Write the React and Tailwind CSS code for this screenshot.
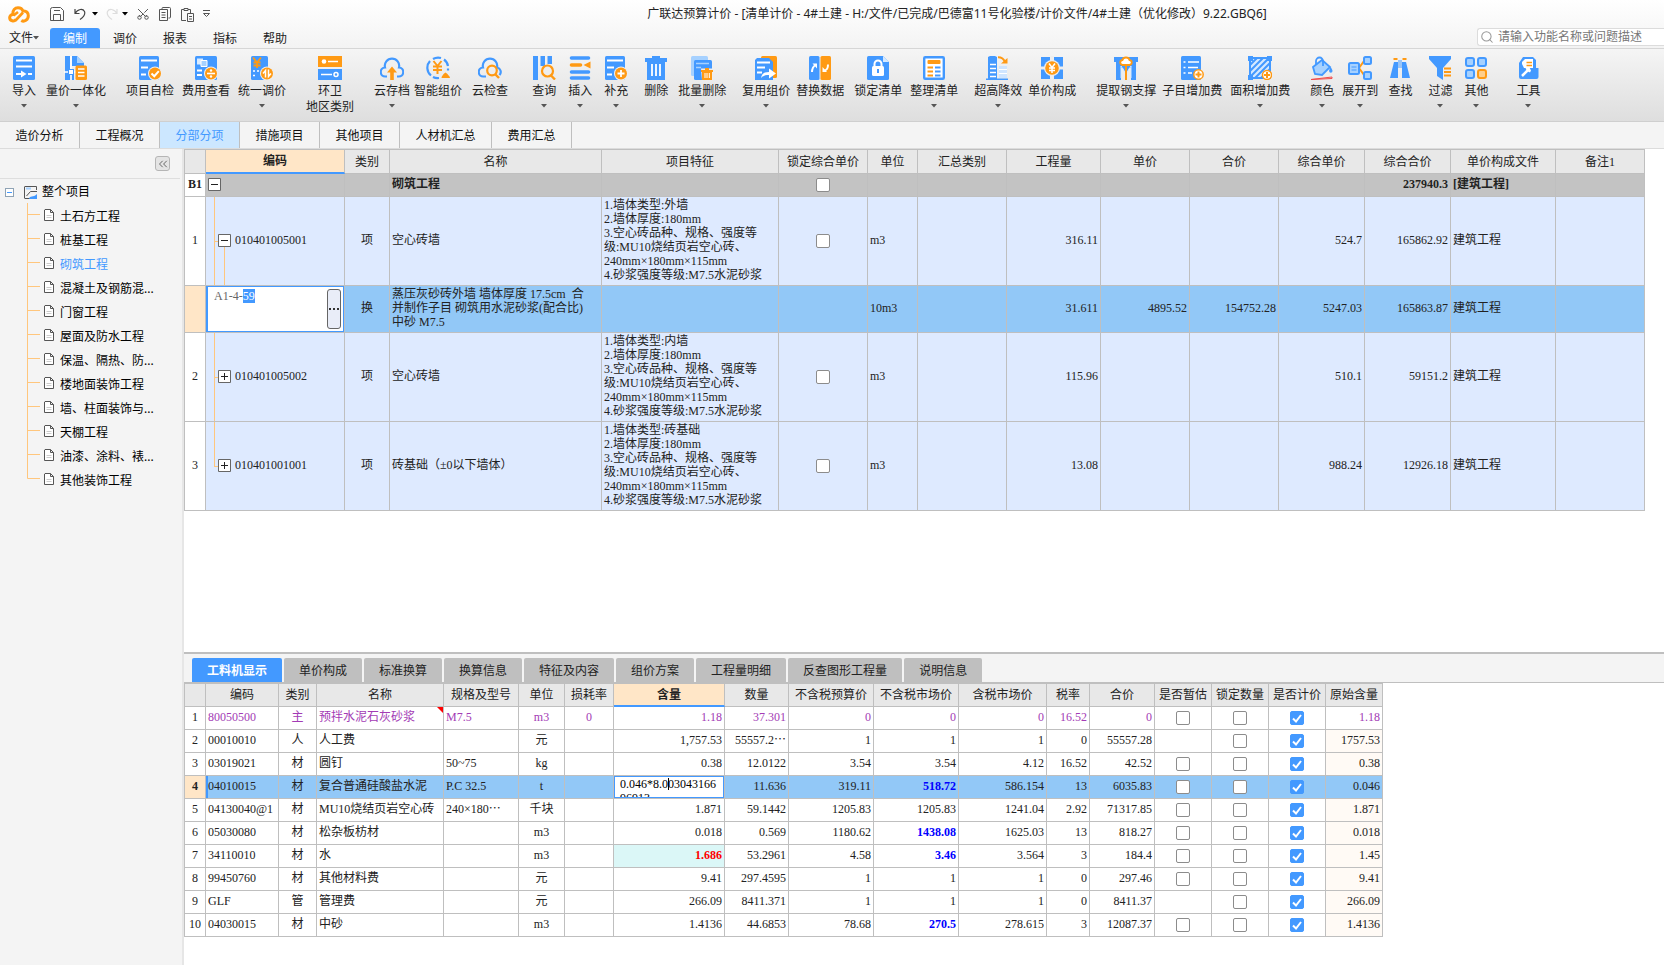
import { useEffect, useRef, useState } from "react"
import clsx from "clsx"
import { Search, Scissors, ChevronsLeft } from "lucide-react"

const BLUE = "#4399ff"
const ORANGE = "#ff9a14"
const PALE = "#a6d1ff"

const badge = (
  <>
    <circle cx="17" cy="17.5" r="7" fill="#efefef" />
    <circle cx="17" cy="17.5" r="6" fill={ORANGE} />
  </>
)

const icons = {
  import: (
    <>
      <rect x="1" width="22" height="24" rx="1.5" fill={BLUE} />
      <path d="M4 4.5h16M4 10.5h16M16 18h4M4 18h6" stroke="#fff" strokeWidth="1.8" />
      <path d="M9 14.5l5.5 3.5L9 21.5z" fill="#fff" />
    </>
  ),
  integrate: (
    <>
      <path d="M1 0h5v24H1zM8 0h5l7 7v3H8zM1 14h9v10H1z" fill={BLUE} />
      <path d="M13 0l7 7h-7z" fill={PALE} />
      <path d="M7 0v24M0 16h12" stroke="#fff" strokeWidth="1.6" />
      <rect x="4.5" y="13.500" width="5" height="5" fill="#fff" stroke={BLUE} />
      <rect x="11.500" y="9.500" width="11.500" height="14.500" rx="1.5" fill={ORANGE} />
      <path d="M14 13h6.5M14 16.500h6.500M14 20h6.500" stroke="#fff" strokeWidth="1.5" />
    </>
  ),
  check: (
    <>
      <rect x="1" width="20" height="24" rx="1.5" fill={BLUE} />
      <path d="M3 4.5h16M3 11.5h7M3 18.5h5" stroke="#fff" strokeWidth="1.8" />
      {badge}
      <path d="M13.5 17.5l2.8 2.7 4.5-5" stroke="#fff" strokeWidth="2" />
    </>
  ),
  fee: (
    <>
      <rect x="1" width="22" height="24" rx="1.5" fill={BLUE} />
      <path d="M3 2.5h6v6H3z" fill="#d9ebff" />
      <path d="M7 4.5h6v6H7z" fill={PALE} stroke="#fff" />
      <path d="M3 14.5h5M3 19h5" stroke="#fff" strokeWidth="1.8" />
      {badge}
      <path d="M13 17.5h8" stroke="#fff" strokeWidth="1.6" />
      <circle cx="17" cy="14.5" r="1.2" fill="#fff" />
      <circle cx="17" cy="20.5" r="1.2" fill="#fff" />
    </>
  ),
  adjust: (
    <>
      <rect x="1" width="17" height="24" rx="1.5" fill={BLUE} />
      <path d="M3 1.5l4 5 4-5M7 6v6M3.5 6.5h7M3.5 9.5h7" stroke={ORANGE} strokeWidth="1.8" />
      <path d="M3 15h2M3 19.5h2M7 15h2" stroke="#fff" strokeWidth="1.6" />
      {badge}
      <path d="M15.5 21.5v-7l-2.500 3M18.500 13.500v7l2.500-3" stroke="#fff" strokeWidth="1.5" />
    </>
  ),
  region: (
    <>
      <rect width="24" height="11" fill={ORANGE} />
      <rect y="13" width="24" height="11" fill={BLUE} />
      <circle cx="6" cy="5.5" r="2.300" fill="#fff" />
      <circle cx="18" cy="18.5" r="2" stroke="#fff" strokeWidth="1.5" />
      <path d="M10 5.5h10M3 18.5h11" stroke="#fff" strokeWidth="1.6" />
    </>
  ),
  cloudUp: (
    <>
      <path d="M7 20.5H5.5a4.500 4.500 0 0 1-.5-9 7.200 7.200 0 1 1 14 0 4.500 4.500 0 0 1-.5 9H17" stroke={BLUE} strokeWidth="2.2" />
      <path d="M12 10.5l5 6h-3.200V24h-3.600v-7.500H7z" fill={ORANGE} />
    </>
  ),
  smart: (
    <>
      <path d="M5 19.5A10 10 0 0 1 4 5M7 3a10 10 0 0 1 8-1M18 3.5a10 10 0 0 1 4 6.500M22 12.500v2M7 21a10 10 0 0 0 6 1" stroke={BLUE} strokeWidth="2.2" />
      <path d="M7.500 5l4 5 4-5M11.500 9.500V18M7 10.500h9M7 14h9" stroke={ORANGE} strokeWidth="2" />
      <path d="M15.500 22c0-2 1.500-2.500 2-4l2-1.500 2 1.500c.5 1.500 2.500 2 2.500 4z" fill={ORANGE} />
    </>
  ),
  cloudSearch: (
    <>
      <path d="M8 20.5H5.500a4.500 4.500 0 0 1-.5-9 7.200 7.200 0 1 1 14 0 4.500 4.500 0 0 1 2.500 7.500" stroke={BLUE} strokeWidth="2.2" />
      <circle cx="14" cy="14.5" r="4.8" stroke={ORANGE} strokeWidth="2.2" />
      <path d="M17.5 18.5l3.500 3.500" stroke={ORANGE} strokeWidth="2.4" />
    </>
  ),
  query: (
    <>
      <path d="M1 0h5v24H1zM8.500 0h4.500v10H8.500zM15.500 0H20v8h-4.500z" fill={BLUE} />
      <circle cx="15.5" cy="15" r="5.5" fill="#eee" stroke={ORANGE} strokeWidth="2.2" />
      <path d="M19 19.5l4 4" stroke={ORANGE} strokeWidth="2.4" />
    </>
  ),
  insert: (
    <>
      <path d="M3.5 2h17M3.5 16h17M3.5 22h17" stroke={BLUE} strokeWidth="3.6" strokeLinecap="round" />
      <path d="M3.5 9h9" stroke={ORANGE} strokeWidth="3.6" strokeLinecap="round" />
      <path d="M22.500 5.500v7L15.500 9z" fill={ORANGE} />
    </>
  ),
  supplement: (
    <>
      <rect x="1" width="20" height="24" rx="1.5" fill={BLUE} />
      <path d="M3 4.5h16M3 11.5h7M3 18.5h5" stroke="#fff" strokeWidth="1.8" />
      {badge}
      <path d="M13.5 17.5h7M17 14v7" stroke="#fff" strokeWidth="1.8" />
    </>
  ),
  trash: (
    <>
      <path d="M8 0h8v2h7v4h-2v18H3V6H1V2h7z" fill={BLUE} />
      <path d="M8 8v12M12 8v12M16 8v12" stroke="#fff" strokeWidth="1.8" />
    </>
  ),
  batchTrash: (
    <>
      <rect x="1" width="17" height="20" rx="1.5" fill={PALE} />
      <rect x="4" y="4" width="18" height="20" rx="1.5" fill={BLUE} />
      <path d="M6 7.5h13M6 11.5h5" stroke={PALE} strokeWidth="1.6" />
      <path d="M11 12.500h12V24H12z" fill="#eee" />
      <path d="M15 12h4v2h4v2h-1v8H12v-8h-1v-2h4z" fill={ORANGE} />
      <path d="M15 17v5M17 17v5M19.300 17v5" stroke="#fff" />
    </>
  ),
  reuse: (
    <>
      <rect x="7" width="16" height="22" rx="1.5" fill={ORANGE} />
      <path d="M3 2h12l4 4v18H1V4z" fill={BLUE} />
      <path d="M3 6.5h13M3 11.5h8M3 16.5h5" stroke="#fff" strokeWidth="1.8" />
      <path d="M7 22c1-5 4-6 8-6v-3.500l7 5-7 5V19c-3 0-5 0-8 3z" fill="#fff" />
    </>
  ),
  replace: (
    <>
      <rect x="1" width="10.5" height="24" rx="1.5" fill={BLUE} />
      <rect x="12.5" width="10.5" height="24" rx="1.5" fill={ORANGE} />
      <path d="M4 16c0-4 1-5.500 4-7.500M20 8.500c0 4-1 5-4 6.500" stroke="#fff" strokeWidth="2" />
      <path d="M4.500 7.500H9v5zM19 16h-4.500v-5z" fill="#fff" />
    </>
  ),
  lock: (
    <>
      <path d="M2.500 0H17l6 6v16.500q0 1.500-1.500 1.500h-19Q1 24 1 22.500v-21Q1 0 2.500 0z" fill={BLUE} />
      <path d="M17 0l6 6h-6z" fill="#d5e9ff" />
      <path d="M8.500 11V8a3.500 3.500 0 0 1 7 0v3" stroke="#fff" strokeWidth="2" />
      <rect x="6" y="10" width="12" height="10" rx="1.5" fill="#fff" />
      <path d="M12 13v4" stroke={BLUE} strokeWidth="2" />
    </>
  ),
  tidy: (
    <>
      <rect x="2.200" y="1.200" width="19.600" height="21.600" rx="1" fill="#fff" stroke={BLUE} strokeWidth="2.4" />
      <rect x="5.500" y="4" width="13" height="4" rx="1" fill={ORANGE} />
      <path d="M5.500 11.500h5.500M5.500 15.500h5.500M5.500 19.500h5.500" stroke={ORANGE} strokeWidth="2" />
      <path d="M13 11.500h5.500M13 15.500h5.500M13 19.500h5.500" stroke={BLUE} strokeWidth="2" />
    </>
  ),
  height: (
    <>
      <path d="M2 1l2-1h5l2 1v23H2zM0 22.500h22V24H0z" fill={BLUE} />
      <path d="M4 8.500h6M4 12.500h6M4 16.500h6M4 20.500h6" stroke="#fff" strokeWidth="1.5" />
      <path d="M13 10h8v12h-8z" fill="#cfe5ff" />
      <path d="M13 13.500h8M13 17.500h8" stroke="#fff" />
      <path d="M12 1.200c4 0 6 1.800 7 5" stroke={ORANGE} strokeWidth="2" />
      <path d="M15 7.500h6.500V2z" fill={ORANGE} />
    </>
  ),
  compose: (
    <>
      <path d="M1 1h9v22H1zM14 1h9v22h-9z" fill={BLUE} />
      <path d="M12 0v24M0 12h24" stroke="#eee" strokeWidth="3" />
      <circle cx="12" cy="12" r="8" fill="#eee" />
      <circle cx="12" cy="12" r="6.8" fill={ORANGE} />
      <path d="M9 7.500l3 4 3-4M12 11v6M9 12h6M9 14.500h6" stroke="#fff" strokeWidth="1.5" />
    </>
  ),
  steel: (
    <>
      <path d="M0 1h24v5h-2v18h-5V12h-2l-3 6-3-6H7v12H2V6H0z" fill={BLUE} />
      <path d="M7 22V10l5 8 5-8v12" stroke="#d5e9ff" />
      <path d="M12 1.500c2 0 3.200 1 3.500 2.500 3 .5 3 4.500 0 5h-7c-3-.5-3-4.500 0-5C8.800 2.500 10 1.500 12 1.500z" fill="#fff" stroke={ORANGE} strokeWidth="1.8" />
      <path d="M12 9v15" stroke={ORANGE} strokeWidth="2" />
    </>
  ),
  subAdd: (
    <>
      <rect x="1" width="20" height="24" rx="1.5" fill={BLUE} />
      <path d="M8 6h11M8 11.500h10M8 17h4M3.500 6h2M3.500 11.500h2M3.500 17h2" stroke="#fff" strokeWidth="1.6" />
      <circle cx="18.5" cy="18.5" r="4.700" fill="#fff" stroke={ORANGE} strokeWidth="1.5" />
      <path d="M15.500 18.500h6M18.500 15.500v6" stroke={ORANGE} strokeWidth="2" />
    </>
  ),
  areaAdd: (
    <>
      <path d="M2 2h20v20H2z" fill="#d5e9ff" stroke={BLUE} strokeWidth="2" />
      <path d="M2 9l7-7M2 15L15 2M2 21L21 2M7 22L22 7M13 22l9-9" stroke={BLUE} strokeWidth="2" />
      <path d="M0 0h5v5H0zM19 0h5v5h-5zM0 19h5v5H0z" fill={BLUE} />
      <circle cx="19" cy="19" r="4.5" fill="#fff" stroke={ORANGE} strokeWidth="1.5" />
      <path d="M16 19h6M19 16v6" stroke={ORANGE} strokeWidth="2" />
    </>
  ),
  color: (
    <>
      <path d="M3 11l9-7 8 7-8 8-7-1z" fill={PALE} stroke={BLUE} strokeWidth="1.8" />
      <path d="M6 9V5a3.500 3.500 0 0 1 7 0v5" stroke={BLUE} strokeWidth="1.8" />
      <path d="M20.500 11c1.500 2 2 3 2 4a1.700 1.700 0 0 1-3.400 0c0-1 .4-2 1.400-4z" fill={BLUE} />
      <path d="M1 23.500l21-2.500v1.500z" stroke="#f04a4a" />
    </>
  ),
  expand: (
    <>
      <path d="M11 12l5-7M11 12l5 7" stroke={ORANGE} strokeWidth="2" />
      <rect x="1" y="7" width="10" height="11" rx="1.5" fill={PALE} stroke={BLUE} strokeWidth="2" />
      <path d="M3.500 11h5M3.500 14h5" stroke={BLUE} />
      <rect x="16" y="1" width="7" height="7" rx="1.5" fill={PALE} stroke={BLUE} strokeWidth="2" />
      <rect x="16" y="16" width="7" height="7" rx="1.5" fill={PALE} stroke={BLUE} strokeWidth="2" />
    </>
  ),
  find: (
    <>
      <path d="M6 6h4v16H2zM14 6h4l4 16h-8z" fill={BLUE} />
      <path d="M11 4v8M13 4v8" stroke={BLUE} />
      <path d="M5.500 3h4M14.500 3h4" stroke={ORANGE} strokeWidth="2" />
    </>
  ),
  filter: (
    <>
      <path d="M1 0h22v3l-8 9v12l-6-4v-8L1 3z" fill={BLUE} />
      <path d="M16 12.500h7M16 16h7M16 19.500h7" stroke={ORANGE} strokeWidth="2" />
    </>
  ),
  other: (
    <>
      <rect x="2" y="2" width="8" height="8" rx="2" fill={PALE} stroke={BLUE} strokeWidth="2" />
      <rect x="14" y="2" width="8" height="8" rx="2" fill={PALE} stroke={BLUE} strokeWidth="2" />
      <rect x="2" y="14" width="8" height="8" rx="2" fill={PALE} stroke={BLUE} strokeWidth="2" />
      <rect x="14" y="14" width="8" height="8" rx="2" fill="#ffcf8c" stroke={ORANGE} strokeWidth="2" />
    </>
  ),
  tool: (
    <>
      <path d="M7 1h10l3 3v8h2.500v9q0 2-2 2H5q-2 0-2-2V7z" fill={BLUE} />
      <path d="M6 8V6l3-3h8v9H8z" fill="#fff" />
      <path d="M10.500 6.500h5.500M10.500 9.500h5.500" stroke={ORANGE} strokeWidth="1.6" />
      <path d="M6 20l6-6" stroke="#fff" strokeWidth="2.5" />
      <path d="M9.500 12l1.500 3 3 1.500 1-2-1.500-3z" fill="#fff" />
    </>
  ),
}

const ribbonItems = [
  { icon: "import", label: "导入", menu: true, gap: "ml-3" },
  { icon: "integrate", label: "量价一体化", menu: true, gap: "ml-2.5" },
  { icon: "check", label: "项目自检", gap: "ml-5" },
  { icon: "fee", label: "费用查看", gap: "ml-2" },
  { icon: "adjust", label: "统一调价", menu: true, gap: "ml-2" },
  { icon: "region", label: "环卫", sub: "地区类别", gap: "ml-5" },
  { icon: "cloudUp", label: "云存档", menu: true, gap: "ml-5" },
  { icon: "smart", label: "智能组价", gap: "ml-1" },
  { icon: "cloudSearch", label: "云检查", gap: "ml-2.5" },
  { icon: "query", label: "查询", menu: true, gap: "ml-6" },
  { icon: "insert", label: "插入", menu: true, gap: "ml-3" },
  { icon: "supplement", label: "补充", menu: true, gap: "ml-3" },
  { icon: "trash", label: "删除", gap: "ml-4" },
  { icon: "batchTrash", label: "批量删除", menu: true, gap: "ml-2.5" },
  { icon: "reuse", label: "复用组价", menu: true, gap: "ml-4" },
  { icon: "replace", label: "替换数据", gap: "ml-1.5" },
  { icon: "lock", label: "锁定清单", gap: "ml-2.5" },
  { icon: "tidy", label: "整理清单", menu: true, gap: "ml-2" },
  { icon: "height", label: "超高降效", menu: true, gap: "ml-4" },
  { icon: "compose", label: "单价构成", gap: "ml-1.5" },
  { icon: "steel", label: "提取钢支撑", menu: true, gap: "ml-5" },
  { icon: "subAdd", label: "子目增加费", gap: "ml-1.5" },
  { icon: "areaAdd", label: "面积增加费", menu: true, gap: "ml-2" },
  { icon: "color", label: "颜色", menu: true, gap: "ml-5" },
  { icon: "expand", label: "展开到", menu: true, gap: "ml-2" },
  { icon: "find", label: "查找", gap: "ml-2.5" },
  { icon: "filter", label: "过滤", menu: true, gap: "ml-4" },
  { icon: "other", label: "其他", menu: true, gap: "ml-3" },
  { icon: "tool", label: "工具", menu: true, gap: "ml-7" },
]

const menus = ["编制", "调价", "报表", "指标", "帮助"]

const pages = ["造价分析", "工程概况", "分部分项", "措施项目", "其他项目", "人材机汇总", "费用汇总"]

const treeItems = [
  "土石方工程", "桩基工程", "砌筑工程", "混凝土及钢筋混...", "门窗工程", "屋面及防水工程",
  "保温、隔热、防...", "楼地面装饰工程", "墙、柱面装饰与...", "天棚工程", "油漆、涂料、裱...", "其他装饰工程",
]

const billColumns = [
  { title: "", width: 21 },
  { title: "编码", width: 139 },
  { title: "类别", width: 45 },
  { title: "名称", width: 212 },
  { title: "项目特征", width: 177 },
  { title: "锁定综合单价", width: 89 },
  { title: "单位", width: 50 },
  { title: "汇总类别", width: 89 },
  { title: "工程量", width: 94 },
  { title: "单价", width: 89 },
  { title: "合价", width: 89 },
  { title: "综合单价", width: 86 },
  { title: "综合合价", width: 86 },
  { title: "单价构成文件", width: 105 },
  { title: "备注1", width: 89 },
]

const feature = (type) =>
  `1.墙体类型:${type}\n2.墙体厚度:180mm\n3.空心砖品种、规格、强度等\n级:MU10烧结页岩空心砖、\n240mm×180mm×115mm\n4.砂浆强度等级:M7.5水泥砂浆`

const billRows = [
  { no: "1", code: "010401005001", open: true, kind: "项", name: "空心砖墙", feature: feature("外墙"), unit: "m3", qty: "316.11", unitPrice: "524.7", total: "165862.92" },
  { no: "", editing: true, kind: "换", name: "蒸压灰砂砖外墙 墙体厚度 17.5cm  合\n并制作子目 砌筑用水泥砂浆(配合比)\n中砂 M7.5", unit: "10m3", qty: "31.611", price: "4895.52", amount: "154752.28", unitPrice: "5247.03", total: "165863.87" },
  { no: "2", code: "010401005002", kind: "项", name: "空心砖墙", feature: feature("内墙"), unit: "m3", qty: "115.96", unitPrice: "510.1", total: "59151.2" },
  { no: "3", code: "010401001001", last: true, kind: "项", name: "砖基础（±0以下墙体）", feature: feature("砖基础"), unit: "m3", qty: "13.08", unitPrice: "988.24", total: "12926.18" },
]

const detailTabs = ["工料机显示", "单价构成", "标准换算", "换算信息", "特征及内容", "组价方案", "工程量明细", "反查图形工程量", "说明信息"]

const detailColumns = [
  { title: "", width: 21 },
  { title: "编码", width: 73 },
  { title: "类别", width: 38 },
  { title: "名称", width: 127 },
  { title: "规格及型号", width: 75 },
  { title: "单位", width: 46 },
  { title: "损耗率", width: 49 },
  { title: "含量", width: 111 },
  { title: "数量", width: 64 },
  { title: "不含税预算价", width: 85 },
  { title: "不含税市场价", width: 85 },
  { title: "含税市场价", width: 88 },
  { title: "税率", width: 43 },
  { title: "合价", width: 65 },
  { title: "是否暂估", width: 57 },
  { title: "锁定数量", width: 57 },
  { title: "是否计价", width: 57 },
  { title: "原始含量", width: 57 },
]

// code, kind, name, spec, unit, loss, content, quantity, budget, market, taxed, rate, total, original
const detailRows = [
  { cells: ["80050500", "主", "预拌水泥石灰砂浆", "M7.5", "m3", "0", "1.18", "37.301", "0", "0", "0", "16.52", "0", "1.18"], main: true },
  { cells: ["00010010", "人", "人工费", "", "元", "", "1,757.53", "55557.2⋯", "1", "1", "1", "0", "55557.28", "1757.53"], noEstimate: true },
  { cells: ["03019021", "材", "圆钉", "50~75", "kg", "", "0.38", "12.0122", "3.54", "3.54", "4.12", "16.52", "42.52", "0.38"] },
  { cells: ["04010015", "材", "复合普通硅酸盐水泥", "P.C 32.5", "t", "", "", "11.636", "319.11", "518.72", "586.154", "13", "6035.83", "0.046"], editing: true, changed: true },
  { cells: ["04130040@1", "材", "MU10烧结页岩空心砖", "240×180⋯", "千块", "", "1.871", "59.1442", "1205.83", "1205.83", "1241.04", "2.92", "71317.85", "1.871"] },
  { cells: ["05030080", "材", "松杂板枋材", "", "m3", "", "0.018", "0.569", "1180.62", "1438.08", "1625.03", "13", "818.27", "0.018"], changed: true },
  { cells: ["34110010", "材", "水", "", "m3", "", "1.686", "53.2961", "4.58", "3.46", "3.564", "3", "184.4", "1.45"], changed: true, adjusted: true },
  { cells: ["99450760", "材", "其他材料费", "", "元", "", "9.41", "297.4595", "1", "1", "1", "0", "297.46", "9.41"] },
  { cells: ["GLF", "管", "管理费", "", "元", "", "266.09", "8411.371", "1", "1", "1", "0", "8411.37", "266.09"], noEstimate: true },
  { cells: ["04030015", "材", "中砂", "", "m3", "", "1.4136", "44.6853", "78.68", "270.5", "278.615", "3", "12087.37", "1.4136"], changed: true },
]

const Caret = ({ className }) => (
  <svg viewBox="0 0 6 4" className={clsx("h-1 w-1.5", className)} fill="currentColor" aria-hidden="true">
    <path d="M0 0h6L3 3.5z" />
  </svg>
)

const Checkbox = ({ label, defaultChecked = false }) => {
  const [checked, setChecked] = useState(defaultChecked)

  return (
    <span className="inline-grid align-middle">
      <input
        type="checkbox"
        aria-label={label}
        checked={checked}
        onChange={(e) => setChecked(e.target.checked)}
        className="col-start-1 row-start-1 h-3.5 w-3.5 appearance-none rounded-[2px] border border-[#8c8c8c] bg-white checked:border-[#4399ff] checked:bg-[#4399ff]"
      />
      {checked && (
        <svg viewBox="0 0 14 14" className="pointer-events-none col-start-1 row-start-1 h-3.5 w-3.5" fill="none">
          <path d="M3 7.5l3 3L11 4" stroke="#fff" strokeWidth="2" />
        </svg>
      )}
    </span>
  )
}

const QuickAccess = () => (
  <div className="flex items-center text-[#555]">
    <svg viewBox="0 0 22 17" className="ml-2 h-[17px] w-[22px]" fill="none" role="img" aria-label="广联达">
      <path d="M8 13.5c-2 2.500-6 1.500-6.300-1.500-.2-2 1.300-3.500 3.300-3.500C4.500 4 7 1.700 10 1.700c2.500 0 4.300 1.300 5 3.300 3.500-.5 5.300 2 5.300 4.800 0 4-4 6.500-7 4.700" stroke={ORANGE} strokeWidth="3" />
      <path d="M7.5 14.5l7.500-8M10 6L5.500 9.500" stroke={ORANGE} strokeWidth="2.6" />
    </svg>
    <button type="button" aria-label="保存" className="ml-5">
      <svg viewBox="0 0 14 14" className="h-3.5 w-3.5" fill="none" stroke="currentColor">
        <path d="M.5 2.500q0-2 2-2h8l3 3v10H.5zM3.500 13.500V7.500h7v6M4 3.500h6" />
      </svg>
    </button>
    <button type="button" aria-label="撤销" className="ml-2.5 text-[#444]">
      <svg viewBox="0 0 12 12" className="h-3 w-3" fill="none" stroke="currentColor" strokeWidth="1.2">
        <path d="M1 1v4.500h4.500M1 5.500C4 .5 9 .5 10.500 3.500c1.200 3-.5 5-4.500 8" />
      </svg>
    </button>
    <button type="button" aria-label="撤销列表" className="ml-1.5 text-black">
      <Caret />
    </button>
    <button type="button" aria-label="恢复" className="ml-2 text-[#ddd]">
      <svg viewBox="0 0 12 12" className="h-3 w-3" fill="none" stroke="currentColor" strokeWidth="1.2">
        <path d="M11 1v4.500H6.500M11 5.500C8 .5 3 .5 1.500 3.500c-1.200 3 .5 5 4.500 8" />
      </svg>
    </button>
    <button type="button" aria-label="恢复列表" className="ml-1 text-black">
      <Caret />
    </button>
    <button type="button" aria-label="剪切" className="ml-2">
      <Scissors className="h-3.5 w-3.5 -rotate-90" strokeWidth={1.7} />
    </button>
    <button type="button" aria-label="复制" className="ml-2">
      <svg viewBox="0 0 14 14" className="h-3.5 w-3.5" fill="none" stroke="currentColor">
        <path d="M4 2.500V1.500q0-1 1-1h6.500q1 0 1 1V10q0 1-1 1h-1M1.500 2.500h8v11h-8zM3.500 5.500h4M3.500 8h4M3.500 10.500h4" />
      </svg>
    </button>
    <button type="button" aria-label="粘贴" className="ml-2">
      <svg viewBox="0 0 15 15" className="h-[15px] w-[15px]" fill="none" stroke="currentColor">
        <path d="M6 13.500H1.500v-11H4M8 2.500h2.500V6M4 1.500h4v2H4zM7.500 6.500h6v8h-6zM9 9.500h3M9 12h3" />
      </svg>
    </button>
    <button type="button" aria-label="自定义工具栏" className="ml-2">
      <svg viewBox="0 0 7 8" className="h-2 w-[7px]" fill="none" stroke="currentColor">
        <path d="M0 .5h7M.5 3.500h6L3.500 6.500z" />
      </svg>
    </button>
  </div>
)

const TitleArea = () => (
  <header className="border-b border-[#d6d6d6] bg-gradient-to-b from-white to-[#f3f3f3]">
    <div className="flex h-7 items-center">
      <QuickAccess />
      <h1 className="flex-1 pl-10 text-center text-[#222]">
        广联达预算计价 - [清单计价 - 4#土建 - H:/文件/已完成/巴德富11号化验楼/计价文件/4#土建（优化修改）9.22.GBQ6]
      </h1>
    </div>
    <div className="flex h-5 items-stretch">
      <button type="button" className="flex w-[50px] items-center pl-[9px]">
        文件
        <Caret className="text-[#555]" />
      </button>
      {menus.map((menu, i) => (
        <button
          key={menu}
          type="button"
          className={clsx("w-[50px] pt-px", i === 0 && "rounded-t-[3px] bg-[#4399ff] text-white")}
        >
          {menu}
        </button>
      ))}
      <label className="mb-0.5 ml-auto flex w-[187px] items-center gap-1 rounded-l-[3px] border border-r-0 border-[#dcdcdc] bg-white pl-0.5">
        <Search className="h-3.5 w-3.5 shrink-0 text-[#999]" strokeWidth={1.8} />
        <input
          type="search"
          aria-label="功能搜索"
          placeholder="请输入功能名称或问题描述"
          className="min-w-0 flex-1 outline-none placeholder:text-[#777]"
        />
      </label>
    </div>
  </header>
)

const Ribbon = () => (
  <div className="flex h-[73px] items-start overflow-hidden border-b border-[#cfcfcf] bg-gradient-to-b from-[#f5f5f5] to-[#dedede] pt-[7px]">
    {ribbonItems.map((item) => (
      <button key={item.label} type="button" className={clsx("flex shrink-0 flex-col items-center whitespace-nowrap", item.gap, item.sub && "w-12")}>
        <svg viewBox="0 0 24 24" className="h-6 w-6" fill="none" aria-hidden="true">
          {icons[item.icon]}
        </svg>
        <span className="h-[18px] leading-[22px]">{item.label}</span>
        {item.sub && <span className="leading-[18px]">{item.sub}</span>}
        {item.menu && <Caret className="mt-1.5 text-[#555]" />}
      </button>
    ))}
  </div>
)

const PageTabs = () => (
  <nav className="flex h-[27px] border-b border-[#dcdcdc] bg-[#f4f4f4]">
    {pages.map((page) => (
      <button
        key={page}
        type="button"
        className={clsx(
          "border-r border-[#bfbfbf] pt-0.5 whitespace-nowrap",
          page === "人材机汇总" ? "w-[92px]" : "w-20",
          page === "分部分项" ? "bg-[#cce7ff] text-[#4399ff]" : "text-[#111]"
        )}
      >
        {page}
      </button>
    ))}
  </nav>
)

const Sidebar = () => (
  <aside className="w-[184px] shrink-0 border-r-2 border-[#e6e6e6] bg-[#f4f4f4]">
    <div className="mr-0.5 flex h-[30px] items-center justify-end border-b border-[#dedede] pr-2.5">
      <button type="button" aria-label="收起" className="grid h-[15px] w-[15px] place-items-center rounded-[3px] border border-[#b5b5b5] bg-[#e4e4e4] text-[#555]">
        <ChevronsLeft className="h-3.5 w-3.5" strokeWidth={1.5} />
      </button>
    </div>
    <div className="flex h-6 items-center pt-0.5 pl-[5px]">
      <svg viewBox="0 0 9 9" className="h-[9px] w-[9px]" fill="none">
        <rect x=".5" y=".5" width="8" height="8" fill="#fff" stroke="#8fa3b5" />
        <path d="M2 4.5h5" stroke={BLUE} />
      </svg>
      <svg viewBox="0 0 13 13" className="ml-2.5 h-[13px] w-[13px]" fill="none">
        <path d="M6.500 12.500H1q-.5 0-.5-.5V1Q.5.5 1 .5h11.500V4M2.500 10l4-4.500h6.500" stroke="#555" />
        <path d="M2 2.500h5" stroke={PALE} strokeWidth="2" />
        <path d="M5 13c1-4 4-1 8-5v5z" fill={BLUE} />
      </svg>
      <span className="ml-[5px] text-black">整个项目</span>
    </div>
    <ul>
      {treeItems.map((item, i) => (
        <li key={item} className="flex h-6 items-center text-black">
          <svg viewBox="0 0 40 24" className="h-6 w-10 shrink-0" fill="none" stroke="#ffc67d">
            <path d={i === treeItems.length - 1 ? "M27.500 0v11.500H40" : "M27.500 0v24M27.500 11.500H40"} />
          </svg>
          <svg viewBox="0 0 10 12" className="ml-1 h-3 w-2.5 shrink-0" fill="#fff" stroke="#555">
            <path d="M1 .5h5.500l3 3v8H.5V1zM6.500.5v3h3" />
            <path d="M2.500 6.500h5M2.500 8.500h5" stroke="#ccc" />
          </svg>
          <a href="#" className={clsx("ml-1.5 pt-1", item === "砌筑工程" && "text-[#4399ff]")}>{item}</a>
        </li>
      ))}
    </ul>
  </aside>
)

const Columns = ({ columns }) => (
  <colgroup>
    {columns.map((column, i) => (
      <col key={i} style={{ width: column.width }} />
    ))}
  </colgroup>
)

const HeaderRow = ({ columns, active, className }) => (
  <tr className={className}>
    {columns.map((column, i) => (
      <th
        key={i}
        className={clsx(
          "border-r whitespace-nowrap",
          column.title === active
            ? "border-b-2 border-r-[#bfbfbf] border-b-[#4399ff] bg-[#ffe6c7] font-bold"
            : "border-b border-[#bfbfbf] bg-[#e8e8e8] font-normal"
        )}
      >
        {column.title}
      </th>
    ))}
  </tr>
)

const Cell = ({ align = "left", className, children }) => (
  <td
    className={clsx(
      "overflow-hidden border-r border-b border-[#bfbfbf] pb-0.5 whitespace-pre",
      align === "left" && "pl-0.5 text-left",
      align === "center" && "text-center",
      align === "right" && "pr-0.5 text-right",
      className
    )}
  >
    {children}
  </td>
)

const Expander = ({ open }) => (
  <button type="button" aria-label={open ? "收起" : "展开"} className="relative block h-[13px] w-[13px] shrink-0">
    <svg viewBox="0 0 13 13" className="h-[13px] w-[13px]" fill="#fff" stroke="#666">
      <path d="M.5.5h12v12H.5z" />
      <path d={open ? "M3 6.500h7" : "M3 6.500h7M6.500 3v7"} stroke="#222" />
    </svg>
  </button>
)

const CodeEditor = () => {
  const ref = useRef(null)
  const [code, setCode] = useState("A1-4-59")

  useEffect(() => {
    ref.current.focus()
    ref.current.setSelectionRange(5, 7)
  }, [])

  return (
    <div className="flex h-[46px] border border-l-2 border-[#4399ff] bg-white pt-0.5 pr-0.5 pb-0.5 pl-1.5">
      <textarea
        ref={ref}
        aria-label="编码"
        value={code}
        onChange={(e) => setCode(e.target.value)}
        className="min-w-0 flex-1 resize-none text-[#666] outline-none selection:bg-[#4399ff] selection:text-white"
      />
      <button type="button" aria-label="选择定额" className="w-3.5 rounded-[3px] border border-[#666] bg-[#e9edf8]">
        <svg viewBox="0 0 12 2" className="h-0.5 w-3" fill="#333">
          <path d="M1 0h2v2H1zM5 0h2v2H5zM9 0h2v2H9z" />
        </svg>
      </button>
    </div>
  )
}

const BillTable = () => (
  <table className="w-px table-fixed border-separate border-spacing-0 border-t border-l border-[#bfbfbf] font-[Liberation_Serif,Noto_Sans_CJK_SC,serif] leading-[14px] text-[#222]">
    <Columns columns={billColumns} />
    <thead>
      <HeaderRow columns={billColumns} active="编码" className="h-6" />
    </thead>
    <tbody>
      <tr className="h-[23px] bg-[#c3c3c3] font-bold">
        <Cell align="center" className="bg-white">B1</Cell>
        <Cell><Expander open /></Cell>
        <Cell />
        <Cell>砌筑工程</Cell>
        <Cell />
        <Cell align="center"><Checkbox label="锁定综合单价 B1" /></Cell>
        <Cell /><Cell /><Cell /><Cell /><Cell /><Cell />
        <Cell align="right">237940.3</Cell>
        <Cell>[建筑工程]</Cell>
        <Cell />
      </tr>
      {billRows.map((row) => (
        <tr key={row.no} className={row.editing ? "h-[47px] bg-[#92c8f7]" : "h-[89px] bg-[#deeaff]"}>
          <Cell align="center" className={row.editing ? "bg-[#ffe6c7]" : "bg-white"}>{row.no}</Cell>
          {row.editing ? (
            <td className="border-r border-b border-[#bfbfbf]"><CodeEditor /></td>
          ) : (
            <Cell className="relative">
              {/* outline guides */}
              <span className={clsx("absolute top-0 left-2 w-px bg-[#ffc67d]", row.last ? "h-1/2" : "h-full")} />
              <span className="absolute top-1/2 left-2 h-px w-1 bg-[#ffc67d]" />
              {row.open && <span className="absolute top-1/2 left-[18px] h-1/2 w-px bg-[#ffc67d]" />}
              <span className="flex items-center gap-1 pl-2.5">
                <Expander open={row.open} />
                {row.code}
              </span>
            </Cell>
          )}
          <Cell align="center">{row.kind}</Cell>
          <Cell>{row.name}</Cell>
          <Cell>{row.feature}</Cell>
          <Cell align="center">{!row.editing && <Checkbox label={`锁定综合单价 ${row.no}`} />}</Cell>
          <Cell>{row.unit}</Cell>
          <Cell />
          <Cell align="right">{row.qty}</Cell>
          <Cell align="right">{row.price}</Cell>
          <Cell align="right">{row.amount}</Cell>
          <Cell align="right">{row.unitPrice}</Cell>
          <Cell align="right">{row.total}</Cell>
          <Cell>建筑工程</Cell>
          <Cell />
        </tr>
      ))}
    </tbody>
  </table>
)

const ContentEditor = () => {
  const [value, setValue] = useState("0.046*8.003043166\n96913")

  return (
    <td className="relative border-r border-b border-[#bfbfbf]">
      <textarea
        aria-label="含量"
        value={value}
        onChange={(e) => setValue(e.target.value)}
        className="block h-[22px] w-full resize-none overflow-hidden border border-[#4399ff] bg-white pl-[5px] text-black outline-none"
      />
      {/* edit caret */}
      <span className="pointer-events-none absolute top-0.5 left-[54px] h-3 w-px bg-black" />
    </td>
  )
}

const DetailTable = () => (
  <table className="w-px table-fixed border-separate border-spacing-0 border-t border-l border-[#bfbfbf] font-[Liberation_Serif,Noto_Sans_CJK_SC,serif] leading-[14px] text-[#222]">
    <Columns columns={detailColumns} />
    <thead>
      <HeaderRow columns={detailColumns} active="含量" className="h-[23px]" />
    </thead>
    <tbody>
      {detailRows.map(({ cells, main, noEstimate, editing, changed, adjusted }, i) => (
        <tr key={cells[0]} className={clsx("h-[23px]", editing ? "bg-[#92c8f7]" : "bg-white", main && "text-[#a33bb5]")}>
          <Cell align="center" className={editing ? "bg-[#ffe6c7] font-bold" : "text-[#222]"}>{i + 1}</Cell>
          <Cell className={clsx(editing && "shadow-[inset_2px_0_0_#4399ff]")}>{cells[0]}</Cell>
          <Cell align="center">{cells[1]}</Cell>
          <Cell className="relative">
            {cells[2]}
            {main && (
              <svg viewBox="0 0 6 6" className="absolute top-0 right-0 h-1.5 w-1.5" fill="#f00">
                <path d="M0 0h6v6z" />
              </svg>
            )}
          </Cell>
          <Cell>{cells[3]}</Cell>
          <Cell align="center">{cells[4]}</Cell>
          <Cell align="center">{cells[5]}</Cell>
          {editing ? (
            <ContentEditor />
          ) : (
            <Cell align="right" className={clsx(adjusted && "bg-[#dbf7f7] font-bold text-[#f00]")}>{cells[6]}</Cell>
          )}
          <Cell align="right">{cells[7]}</Cell>
          <Cell align="right">{cells[8]}</Cell>
          <Cell align="right" className={clsx(changed && "font-bold text-[#00f]")}>{cells[9]}</Cell>
          <Cell align="right">{cells[10]}</Cell>
          <Cell align="right">{cells[11]}</Cell>
          <Cell align="right">{cells[12]}</Cell>
          <Cell align="center">{!noEstimate && <Checkbox label={`是否暂估 ${i + 1}`} />}</Cell>
          <Cell align="center"><Checkbox label={`锁定数量 ${i + 1}`} /></Cell>
          <Cell align="center"><Checkbox label={`是否计价 ${i + 1}`} defaultChecked /></Cell>
          <Cell align="right" className={clsx(!editing && !main && "bg-[#fffaf5]")}>{cells[13]}</Cell>
        </tr>
      ))}
    </tbody>
  </table>
)

const DetailPane = () => (
  <section className="shrink-0 border-t-2 border-[#bfbfbf] bg-white pb-7">
    <div className="flex gap-0.5 border-b border-[#bfbfbf] bg-[#f4f4f4] pt-1 pl-2">
      {detailTabs.map((tab, i) => (
        <button
          key={tab}
          type="button"
          className={clsx(
            "h-6 rounded-t-[2px] px-[15px] pt-0.5 whitespace-nowrap",
            i === 0 ? "bg-[#4399ff] font-bold text-white" : "bg-[#bfbfbf] text-[#222]"
          )}
        >
          {tab}
        </button>
      ))}
    </div>
    <DetailTable />
  </section>
)

export default function App() {
  return (
    <div className="flex min-h-screen flex-col bg-white font-[Noto_Sans,Noto_Sans_CJK_SC,sans-serif] text-xs text-[#222]">
      <TitleArea />
      <Ribbon />
      <PageTabs />
      <div className="flex flex-1">
        <Sidebar />
        <main className="flex min-w-0 flex-1 flex-col overflow-hidden">
          <section className="flex-1">
            <BillTable />
          </section>
          <DetailPane />
        </main>
      </div>
    </div>
  )
}
